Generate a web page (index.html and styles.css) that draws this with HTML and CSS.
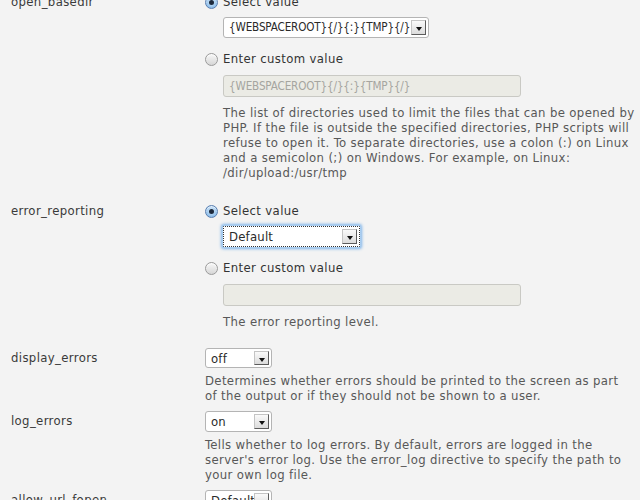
FILE: index.html
```html
<!DOCTYPE html>
<html>
<head>
<meta charset="utf-8">
<link rel="stylesheet" href="styles.css">
</head>
<body>
<div class="form">
  <div class="row opt">
    <div class="label">open_basedir</div>
    <div class="field">
      <div class="radio-line"><span class="radio checked"></span>Select value</div>
      <div class="select w206"><span class="val code">{WEBSPACEROOT}{/}{:}{TMP}{/}</span><span class="arrow"></span></div>
      <div class="radio-line second"><span class="radio"></span>Enter custom value</div>
      <div class="input code">{WEBSPACEROOT}{/}{:}{TMP}{/}</div>
      <p class="desc">The list of directories used to limit the files that can be opened by<br>PHP. If the file is outside the specified directories, PHP scripts will<br>refuse to open it. To separate directories, use a colon (:) on Linux<br>and a semicolon (;) on Windows. For example, on Linux:<br>/dir/upload:/usr/tmp</p>
    </div>
  </div>
  <div class="row opt">
    <div class="label">error_reporting</div>
    <div class="field">
      <div class="radio-line"><span class="radio checked"></span>Select value</div>
      <div class="select w137 focus"><span class="val">Default</span><span class="arrow"></span></div>
      <div class="radio-line second"><span class="radio"></span>Enter custom value</div>
      <div class="input"></div>
      <p class="desc">The error reporting level.</p>
    </div>
  </div>
  <div class="row simple">
    <div class="label">display_errors</div>
    <div class="field">
      <div class="select w67 small"><span class="val">off</span><span class="arrow"></span></div>
      <p class="desc">Determines whether errors should be printed to the screen as part<br>of the output or if they should not be shown to a user.</p>
    </div>
  </div>
  <div class="row simple">
    <div class="label">log_errors</div>
    <div class="field">
      <div class="select w67"><span class="val">on</span><span class="arrow"></span></div>
      <p class="desc">Tells whether to log errors. By default, errors are logged in the<br>server's error log. Use the error_log directive to specify the path to<br>your own log file.</p>
    </div>
  </div>
  <div class="row simple">
    <div class="label">allow_url_fopen</div>
    <div class="field">
      <div class="select w67"><span class="val">Default</span><span class="arrow"></span></div>
    </div>
  </div>
</div>
</body>
</html>
```

FILE: styles.css
```css
html, body {
  margin: 0;
  padding: 0;
  background: #f3f3f3;
  overflow: hidden;
}
body {
  font-family: "DejaVu Sans Condensed", "DejaVu Sans", sans-serif;
  font-size: 13px;
  letter-spacing: 0.36px;
  line-height: 15px;
  color: #333;
}
.form {
  margin-top: -10px;
  padding-left: 11px;
  display: flex;
  flex-direction: column;
  gap: 8px;
}
.row {
  display: grid;
  grid-template-columns: 194px 1fr;
}
.row.opt {
  padding-top: 4px;
  padding-bottom: 11px;
}
.label {
  line-height: 16px;
  color: #3a3a3a;
}
.row.simple .label {
  padding-top: 2px;
}
.field {
  display: flex;
  flex-direction: column;
  align-items: flex-start;
}
.radio-line {
  display: flex;
  align-items: center;
  line-height: 16px;
  height: 16px;
  color: #333;
}
.radio-line.second {
  margin-top: 13px;
}
.radio {
  flex: none;
  width: 11px;
  height: 11px;
  border-radius: 50%;
  border: 1px solid #9a9a9a;
  background: linear-gradient(#f8f8f8, #d6d6d6);
  margin-right: 5px;
  position: relative;
  box-shadow: inset 0 1px 1px rgba(255,255,255,0.8);
}
.radio.checked {
  border-color: #5a7fb0;
  background: radial-gradient(circle at 50% 40%, #d8ecfc 0%, #9cc7ee 60%, #6fa6dd 100%);
}
.radio.checked::after {
  content: "";
  position: absolute;
  left: 3px;
  top: 3px;
  width: 5px;
  height: 5px;
  border-radius: 50%;
  background: #1d2a3c;
}
.row.opt .select, .row.opt .input, .row.opt .desc {
  margin-left: 18px;
}
.select {
  box-sizing: border-box;
  height: 21px;
  margin-top: 7px;
  background: #fff;
  border: 1px solid #b4b4b4;
  border-radius: 3px;
  display: flex;
  align-items: stretch;
  color: #2a2a2a;
  letter-spacing: 0.2px;
}
.row.simple .select {
  margin-top: 0;
}
.select.small {
  height: 20px;
}
.select .val {
  flex: 1;
  padding-left: 5px;
  line-height: 19px;
  white-space: nowrap;
  overflow: hidden;
}
.code {
  font-size: 11.6px;
  letter-spacing: -0.15px;
}
.select .arrow {
  flex: none;
  width: 13px;
  margin: 2px 2px 2px 0;
  background: linear-gradient(#fafafa, #dcdcdc);
  border: 1px solid #c4c4c4;
  border-right-color: #5c5c5c;
  border-bottom-color: #5c5c5c;
  position: relative;
}
.select .arrow::after {
  content: "";
  position: absolute;
  left: 4px;
  top: 6px;
  border-left: 3px solid transparent;
  border-right: 3px solid transparent;
  border-top: 4px solid #111;
}
.w206 { width: 206px; }
.w137 { width: 137px; }
.w67 { width: 67px; }
.select.focus {
  border: 1px dotted #333;
  border-radius: 1px;
  box-shadow: 0 0 0 1px #a9cdf0, 0 0 3px 2px #7eb4ea;
}
.input {
  box-sizing: border-box;
  width: 298px;
  height: 22px;
  margin-top: 8px;
  background: #ebebe5;
  border: 1px solid #c9c9c4;
  border-radius: 3px;
  color: #a5a5a0;
  padding-left: 5px;
  line-height: 20px;
}
.desc {
  margin: 8px 0 0 0;
  line-height: 15px;
  color: #585858;
  white-space: nowrap;
}
.row.simple .desc {
  margin-top: 5px;
}
```
